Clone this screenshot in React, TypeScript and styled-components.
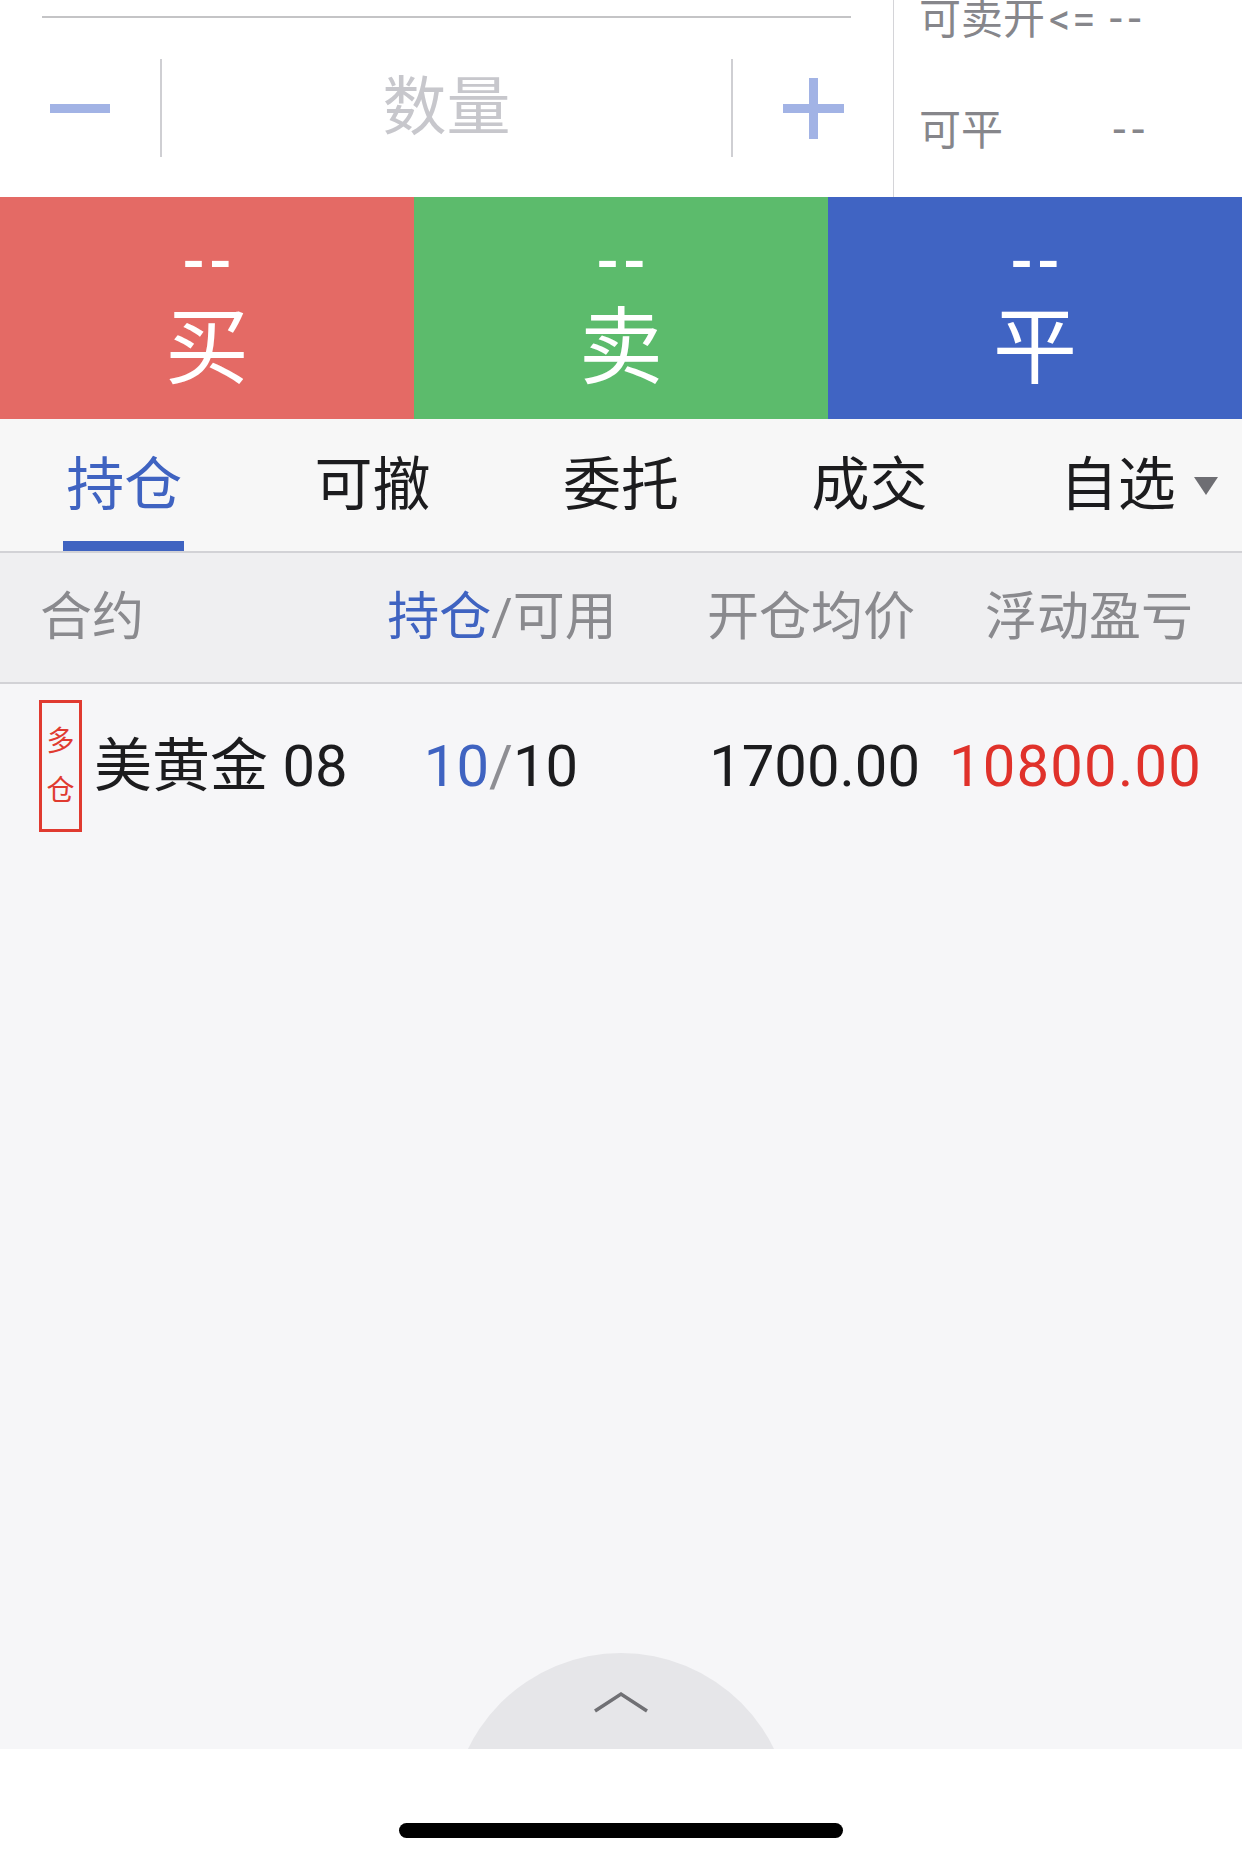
import React from "react";
import styled, { createGlobalStyle } from "styled-components";

const GlobalStyle = createGlobalStyle`
    html, body {
        margin: 0;
        padding: 0;
        background: #fff;
    }
    * {
        box-sizing: border-box;
    }
`

const FONT = `"Roboto", "Noto Sans CJK SC", sans-serif`;

const Page = styled.div`
    width: 1242px;
    height: 1861px;
    display: flex;
    flex-direction: column;
    font-family: ${FONT};
    overflow: hidden;
`

const TopPanel = styled.div`
    height: 197px;
    display: flex;
    background: #fff;
`

const OrderInput = styled.div`
    width: 894px;
    border-right: 1px solid #d4d4d8;
    display: flex;
    flex-direction: column;
`

const PriceRule = styled.div`
    margin: 16px 42px 0 42px;
    height: 2px;
    background: #c4c4c6;
`

const QuantityRow = styled.div`
    margin-top: 41px;
    height: 98px;
    display: flex;
    align-items: center;
`

const StepButton = styled.div`
    width: 160px;
    height: 100%;
    display: flex;
    align-items: center;
    justify-content: center;
`

const Divider = styled.div`
    width: 2px;
    height: 100%;
    background: #cfcfd3;
`

const QuantityField = styled.div`
    flex: 1;
    text-align: center;
    font-size: 64px;
    line-height: 98px;
    color: #c7c7cc;
`

const StockInfo = styled.div`
    flex: 1;
    padding-left: 25px;
    display: flex;
    flex-direction: column;
`

const InfoLine = styled.div`
    display: flex;
    align-items: baseline;
    font-size: 42px;
    line-height: 50px;
    color: #86868b;
    white-space: nowrap;
    margin-top: ${p => p.$top}px;
`

const InfoLabel = styled.span`
    width: ${p => p.$width ? `${p.$width}px` : "auto"};
`

const Operator = styled.span`
    margin-left: 4px;
    letter-spacing: 2px;
`

const Dashes = styled.span`
    margin-left: ${p => p.$gap || 0}px;
    letter-spacing: 6px;
    font-size: 46px;
`

const ActionBar = styled.div`
    height: 222px;
    display: grid;
    grid-template-columns: repeat(3, 1fr);
`

const ActionButton = styled.div`
    background: ${p => p.$color};
    color: #fff;
    display: flex;
    flex-direction: column;
    align-items: center;
`

const ActionPrice = styled.div`
    margin-top: 36px;
    font-size: 64px;
    line-height: 60px;
    letter-spacing: 5px;
    padding-left: 5px;
    font-weight: 500;
`

const ActionLabel = styled.div`
    margin-top: 6px;
    font-size: 84px;
    line-height: 100px;
`

const TabBar = styled.div`
    height: 134px;
    background: #f7f7f7;
    border-bottom: 2px solid #d2d2d6;
    display: grid;
    grid-template-columns: repeat(5, 1fr);
`

const Tab = styled.div`
    position: relative;
    display: flex;
    justify-content: center;
    padding-top: 30px;
    font-size: 58px;
    line-height: 72px;
    color: ${p => p.$active ? "#3f63c1" : "#1c1c1e"};
`

const TabText = styled.span`
    position: relative;
`

const Caret = styled.span`
    position: absolute;
    left: 100%;
    top: 28px;
    margin-left: 18px;
    width: 0;
    height: 0;
    border-left: 12px solid transparent;
    border-right: 12px solid transparent;
    border-top: 18px solid #6e6e73;
`

const ActiveBar = styled.div`
    position: absolute;
    bottom: 0;
    left: 50%;
    margin-left: -61px;
    width: 121px;
    height: 10px;
    background: #3f63c1;
`

const ColumnGrid = styled.div`
    display: grid;
    grid-template-columns: 336px 252px 293px 282px;
    align-items: center;
    padding-left: 40px;
`

const HeaderRow = styled(ColumnGrid)`
    height: 131px;
    background: #efeff1;
    border-bottom: 2px solid #d2d2d6;
    font-size: 52px;
    line-height: 60px;
    color: #8a8a8e;
`

const Cell = styled.div`
    text-align: ${p => p.$align || "left"};
    padding-right: ${p => p.$pr || 0}px;
    letter-spacing: ${p => p.$spacing || 0}px;
    white-space: nowrap;
`

const Accent = styled.span`
    color: ${p => p.$color};
`

const Body = styled.div`
    flex: 1;
    background: #f6f6f8;
    display: flex;
    flex-direction: column;
`

const PositionRow = styled(ColumnGrid)`
    margin-top: 16px;
    padding-left: 39px;
    height: 132px;
    font-size: 58px;
    line-height: 70px;
    color: #1c1c1e;
`

const NameCell = styled.div`
    display: flex;
    align-items: center;
    height: 100%;
    white-space: pre;
`

const SideTag = styled.div`
    width: 43px;
    height: 132px;
    border: 3px solid #e03a30;
    color: #e03a30;
    font-size: 28px;
    line-height: 49px;
    display: flex;
    flex-direction: column;
    align-items: center;
    justify-content: center;
    margin-right: 12px;
`

const Spacer = styled.div`
    flex: 1;
`

const PullHandle = styled.div`
    height: 96px;
    overflow: hidden;
    display: flex;
    justify-content: center;
`

const HandleDisc = styled.div`
    width: 340px;
    height: 340px;
    border-radius: 50%;
    background: #e6e6e9;
    display: flex;
    justify-content: center;
    padding-top: 38px;
    flex-shrink: 0;
`

const Footer = styled.div`
    height: 112px;
    background: #fff;
    display: flex;
    justify-content: center;
    padding-top: 74px;
`

const HomeIndicator = styled.div`
    width: 444px;
    height: 15px;
    border-radius: 8px;
    background: #000;
`

const actions = [
    { label: "买", color: "#e46a65" },
    { label: "卖", color: "#5cbb6c" },
    { label: "平", color: "#4064c3" },
];

const tabs = ["持仓", "可撤", "委托", "成交", "自选"];

export default function App() {
    return (
        <Page>
            <GlobalStyle />
            <TopPanel>
                <OrderInput>
                    <PriceRule />
                    <QuantityRow>
                        <StepButton>
                            <svg width="60" height="9" viewBox="0 0 60 9">
                                <rect x="0" y="0" width="60" height="9" fill="#a2b3e5" />
                            </svg>
                        </StepButton>
                        <Divider />
                        <QuantityField>数量</QuantityField>
                        <Divider />
                        <StepButton>
                            <svg width="61" height="61" viewBox="0 0 61 61">
                                <rect x="0" y="26" width="61" height="9" fill="#a2b3e5" />
                                <rect x="26" y="0" width="9" height="61" fill="#a2b3e5" />
                            </svg>
                        </StepButton>
                    </QuantityRow>
                </OrderInput>
                <StockInfo>
                    <InfoLine $top={-7}>
                        <InfoLabel>可卖开</InfoLabel>
                        <Operator>&lt;=</Operator>
                        <Dashes $gap={12}>--</Dashes>
                    </InfoLine>
                    <InfoLine $top={59}>
                        <InfoLabel $width={194}>可平</InfoLabel>
                        <Dashes>--</Dashes>
                    </InfoLine>
                </StockInfo>
            </TopPanel>

            <ActionBar>
                {actions.map(a => (
                    <ActionButton key={a.label} $color={a.color}>
                        <ActionPrice>--</ActionPrice>
                        <ActionLabel>{a.label}</ActionLabel>
                    </ActionButton>
                ))}
            </ActionBar>

            <TabBar>
                {tabs.map((t, i) => (
                    <Tab key={t} $active={i === 0}>
                        <TabText>
                            {t}
                            {t === "自选" && <Caret />}
                        </TabText>
                        {i === 0 && <ActiveBar />}
                    </Tab>
                ))}
            </TabBar>

            <HeaderRow>
                <Cell>合约</Cell>
                <Cell $align="center"><Accent $color="#3f63c1">持仓</Accent>/可用</Cell>
                <Cell $align="right" $pr={6}>开仓均价</Cell>
                <Cell $align="right" $pr={10}>浮动盈亏</Cell>
            </HeaderRow>

            <Body>
                <PositionRow>
                    <NameCell>
                        <SideTag>
                            <span>多</span>
                            <span>仓</span>
                        </SideTag>
                        {"美黄金 08"}
                    </NameCell>
                    <Cell $align="center">
                        <Accent $color="#3f63c1">10</Accent><Accent $color="#8e8e93">/</Accent>10
                    </Cell>
                    <Cell $align="right">1700.00</Cell>
                    <Cell $align="right" $spacing={1.2}><Accent $color="#e0322b">10800.00</Accent></Cell>
                </PositionRow>
                <Spacer />
                <PullHandle>
                    <HandleDisc>
                        <svg width="56" height="22" viewBox="0 0 56 22">
                            <polyline points="2,20 28,3 54,20" fill="none" stroke="#707074" strokeWidth="3.5" />
                        </svg>
                    </HandleDisc>
                </PullHandle>
            </Body>

            <Footer>
                <HomeIndicator />
            </Footer>
        </Page>
    );
}
